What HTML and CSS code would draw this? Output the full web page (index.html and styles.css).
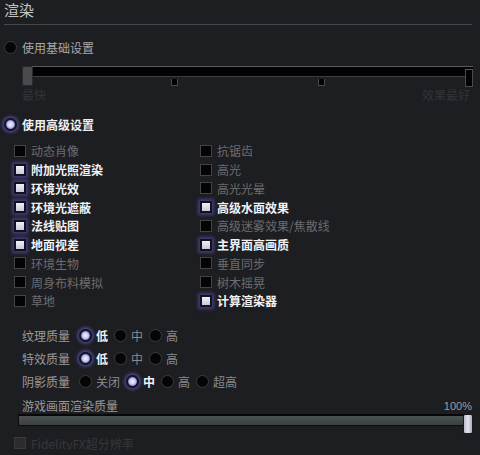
FILE: index.html
```html
<!DOCTYPE html>
<html lang="zh-CN">
<head>
    <meta charset="UTF-8">
    <meta name="viewport" content="width=device-width, initial-scale=1.0">
    <title>渲染设置</title>
    <link rel="stylesheet" href="styles.css">
</head>
<body>
    <div class="panel">
        <h2 class="title">渲染</h2>

        <div class="mode-row">
            <span class="radio"></span>
            <span class="mode-label">使用基础设置</span>
        </div>

        <div class="preset-slider">
            <div class="preset-track"></div>
            <span class="tick" style="left: 151px"></span>
            <span class="tick" style="left: 298px"></span>
            <span class="tick tick-end"></span>
            <span class="preset-thumb"></span>
        </div>
        <div class="preset-labels">
            <span>最快</span>
            <span>效果最好</span>
        </div>

        <div class="mode-row">
            <span class="radio checked"></span>
            <span class="mode-label active">使用高级设置</span>
        </div>

        <div class="options">
            <div class="check"><span class="box"></span>动态肖像</div>
            <div class="check"><span class="box"></span>抗锯齿</div>
            <div class="check on"><span class="box"></span>附加光照渲染</div>
            <div class="check"><span class="box"></span>高光</div>
            <div class="check on"><span class="box"></span>环境光效</div>
            <div class="check"><span class="box"></span>高光光晕</div>
            <div class="check on"><span class="box"></span>环境光遮蔽</div>
            <div class="check on"><span class="box"></span>高级水面效果</div>
            <div class="check on"><span class="box"></span>法线贴图</div>
            <div class="check"><span class="box"></span>高级迷雾效果/焦散线</div>
            <div class="check on"><span class="box"></span>地面视差</div>
            <div class="check on"><span class="box"></span>主界面高画质</div>
            <div class="check"><span class="box"></span>环境生物</div>
            <div class="check"><span class="box"></span>垂直同步</div>
            <div class="check"><span class="box"></span>周身布料模拟</div>
            <div class="check"><span class="box"></span>树木摇晃</div>
            <div class="check"><span class="box"></span>草地</div>
            <div class="check on"><span class="box"></span>计算渲染器</div>
        </div>

        <div class="quality">
            <div class="quality-row">
                <span class="q-label">纹理质量</span>
                <span class="opt on"><span class="radio checked"></span>低</span>
                <span class="opt"><span class="radio"></span>中</span>
                <span class="opt"><span class="radio"></span>高</span>
            </div>
            <div class="quality-row">
                <span class="q-label">特效质量</span>
                <span class="opt on"><span class="radio checked"></span>低</span>
                <span class="opt"><span class="radio"></span>中</span>
                <span class="opt"><span class="radio"></span>高</span>
            </div>
            <div class="quality-row">
                <span class="q-label">阴影质量</span>
                <span class="opt"><span class="radio"></span>关闭</span>
                <span class="opt on"><span class="radio checked"></span>中</span>
                <span class="opt"><span class="radio"></span>高</span>
                <span class="opt"><span class="radio"></span>超高</span>
            </div>
        </div>

        <div class="scale-head">
            <span>游戏画面渲染质量</span>
            <span class="scale-value">100%</span>
        </div>
        <div class="scale-slider">
            <div class="scale-track"></div>
            <span class="scale-thumb"></span>
        </div>

        <div class="check disabled"><span class="box"></span>FidelityFX超分辨率</div>
    </div>
</body>
</html>
```

FILE: styles.css
```css
body {
    margin: 0;
    background-color: #1d1e22;
    font-family: "Noto Sans CJK SC", "Noto Sans", sans-serif;
    font-size: 12px;
    color: #9c9c9e;
    overflow: hidden;
}

.panel {
    padding: 0 8px 0 4px;
}

.title {
    margin: 0;
    height: 24px;
    line-height: 20px;
    font-size: 15px;
    font-weight: normal;
    color: #c4c4c6;
    border-bottom: 1px solid #46474c;
}

.mode-row {
    display: flex;
    align-items: center;
    gap: 5px;
    height: 20px;
    margin-top: 12px;
}

.mode-label {
    color: #a8a8aa;
}

.mode-label.active {
    color: #f0f0f2;
    font-weight: bold;
}

.radio {
    box-sizing: border-box;
    width: 13px;
    height: 13px;
    border-radius: 50%;
    background-color: #050506;
    border: 1px solid #3c3c40;
    flex-shrink: 0;
}

.radio.checked {
    background: radial-gradient(circle, #f2f2ff 0, #c9cbee 45%, #7d80c8 70%);
    border: 2px solid #15152a;
    box-shadow: 0 0 3px 2px rgba(98, 86, 190, 0.65);
}

/* preset slider */
.preset-slider {
    position: relative;
    height: 21px;
    margin: 9px -1px 0 16px;
}

.preset-track {
    margin: 3px 0 0 10px;
    height: 9px;
    background-color: #020203;
    border-top: 1px solid #5a5a5e;
    border-bottom: 1px solid #3e3e42;
}

.tick {
    position: absolute;
    top: 13px;
    width: 5px;
    height: 6px;
    background-color: #020203;
    border: 1px solid #4a4a4e;
    border-top: none;
}

.tick-end {
    right: 0;
    top: 3px;
    width: 6px;
    height: 16px;
    border-top: 1px solid #5a5a5e;
}

.preset-thumb {
    position: absolute;
    left: 2px;
    top: 0;
    box-sizing: border-box;
    width: 11px;
    height: 20px;
    background-color: #4a4a4e;
    border: 1px solid #2a2a2e;
    border-radius: 2px;
}

.preset-labels {
    display: flex;
    justify-content: space-between;
    height: 14px;
    line-height: 14px;
    margin: 1px 2px 0 18px;
    color: #333338;
}

/* checkbox grid */
.options {
    display: grid;
    grid-template-columns: 186px 1fr;
    grid-auto-rows: 18.75px;
    margin-top: 7.5px;
    padding-left: 10px;
}

.check {
    display: flex;
    align-items: center;
    gap: 5px;
    color: #6c6c70;
}

.check.on {
    color: #f2f2f4;
    font-weight: bold;
}

.box {
    box-sizing: border-box;
    width: 12px;
    height: 12px;
    background-color: #040405;
    border: 1px solid #444448;
    flex-shrink: 0;
}

.check.on .box {
    background: linear-gradient(#eef2f6, #c4ccd8);
    border: 2px solid #12121e;
    box-shadow: 0 0 3px 2px rgba(92, 80, 180, 0.6);
}

.check.disabled {
    margin: 2px 0 0 10px;
    height: 14px;
    color: #37373b;
}

.check.disabled .box {
    background-color: #2c2c30;
    border-color: #3a3a3e;
}

/* quality radios */
.quality {
    margin-top: 14px;
    padding-left: 18px;
}

.quality-row {
    display: flex;
    align-items: center;
    height: 23px;
}

.q-label {
    width: 57px;
    color: #9a9a9c;
}

.opt {
    display: flex;
    align-items: center;
    gap: 4px;
    margin-right: 6px;
    color: #8a8a8e;
}

.opt.on {
    color: #f2f2f4;
    font-weight: bold;
}

/* render scale slider */
.scale-head {
    display: flex;
    justify-content: space-between;
    height: 16px;
    line-height: 16px;
    margin: 5px 0 0 18px;
    color: #9a9a9c;
}

.scale-value {
    color: #9c9ca0;
    font-family: "Liberation Sans", sans-serif;
    font-size: 11px;
}

.scale-slider {
    position: relative;
    height: 20px;
    margin: -4px -1px 0 14px;
}

.scale-track {
    margin-top: 4px;
    margin-right: 4px;
    height: 9px;
    background: linear-gradient(#4c5253, #3a3f40);
    border: 1px solid #0c0c0e;
    border-top: 2px solid #08080a;
}

.scale-thumb {
    position: absolute;
    right: 0;
    top: 0;
    box-sizing: border-box;
    width: 10px;
    height: 20px;
    background: linear-gradient(90deg, #b9bccb, #e2e4ee 50%, #a9acbc);
    border: 1px solid #1a1a22;
    border-radius: 2px;
}
```
